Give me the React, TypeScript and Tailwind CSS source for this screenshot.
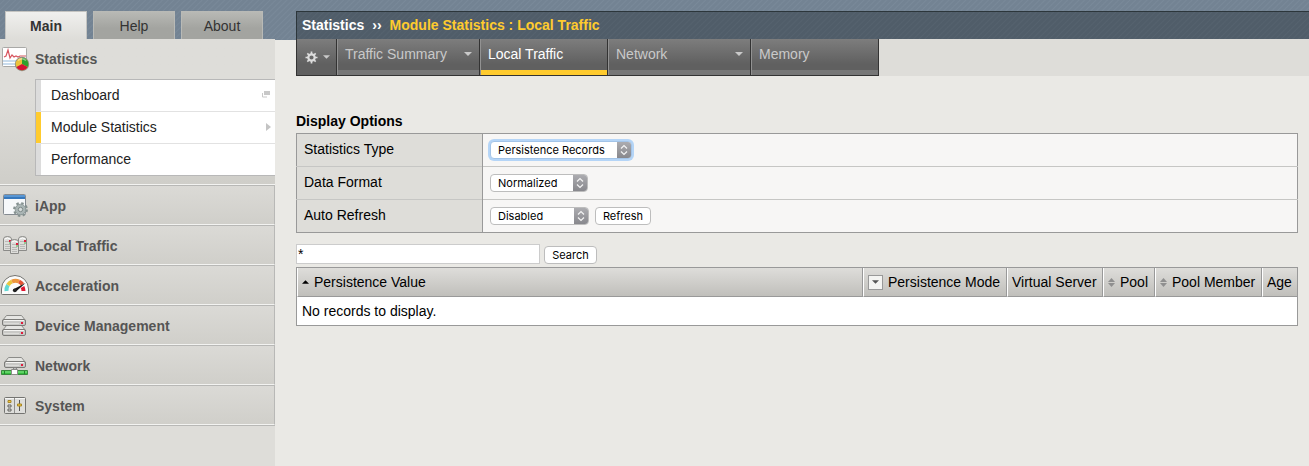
import type { ReactNode } from 'react';

function StatisticsIcon() {
  return (
    <svg width="30" height="28" viewBox="0 0 30 28" aria-hidden="true">
      <rect x="2.5" y="2.5" width="24" height="19" rx="1" fill="#fff" stroke="#a9a9a7" />
      <path d="M3 16h23M3 19h23" stroke="#c9dced" strokeWidth="2" />
      <path d="M4 12l2-1 2-6 2 8 2-3 2 2 2-1 2 1 2-1h6" fill="none" stroke="#d8565f" strokeWidth="1.2" />
      <circle cx="22" cy="19" r="7.2" fill="#8a8a86" />
      <circle cx="22" cy="19" r="6.3" fill="#ecc33b" />
      <path d="M22 19V12.700a6.300 6.300 0 0 1 5.500 9.400z" fill="#2fa12d" />
      <path d="M22 19l5.500 3.100a6.300 6.300 0 0 1-11 0z" fill="#d51234" />
      <path d="M18 15.500q4-3.500 8 0" fill="none" stroke="#fff" strokeOpacity=".45" strokeWidth="1.500" />
    </svg>
  );
}

function IAppIcon() {
  return (
    <svg width="30" height="28" viewBox="0 0 30 28" aria-hidden="true">
      <rect x="3.5" y="2.500" width="22" height="20" rx="1" fill="#f6f8fa" stroke="#858b91" />
      <path d="M4 3h21v4H4z" fill="#3678bd" />
      <path d="M4 4h21" stroke="#7db4e8" />
      <circle cx="20.500" cy="17.500" r="6.300" fill="none" stroke="#84908f" strokeWidth="2.200" strokeDasharray="2.470 2.470" />
      <circle cx="20.500" cy="17.500" r="5.300" fill="#aab5b5" stroke="#8d9998" />
      <circle cx="20.500" cy="17.500" r="2.200" fill="#d5dbda" stroke="#7d8988" />
    </svg>
  );
}

function Tower({ x, y }: { x: number; y: number }) {
  return (
    <g transform={`translate(${x} ${y})`}>
      <path d="M.5 3Q.5 .5 4.500 .5T8.500 3V14.500H.5z" fill="#dededb" stroke="#8b8b88" />
      <path d="M2 5.500h4M2 8.500h5M2 10.500h5M2 12.500h5" stroke="#b9b9b6" />
      <path d="M1.500 3q3-2 6 0" fill="none" stroke="#fff" />
      <path d="M6 4h2v2H6z" fill="#e01b3c" />
      <path d="M6 6.500h2v1H6z" fill="#4db34a" />
    </g>
  );
}

function LocalTrafficIcon() {
  return (
    <svg width="30" height="28" viewBox="0 0 30 28" aria-hidden="true">
      <Tower x={3} y={4} />
      <Tower x={18} y={4} />
      <Tower x={10} y={7} />
    </svg>
  );
}

function AccelerationIcon() {
  return (
    <svg width="30" height="28" viewBox="0 0 30 28" aria-hidden="true">
      <path d="M1.500 21.500V17a13.500 13.500 0 0 1 27 0v4.500q0 1-1 1h-25q-1 0-1-1z" fill="#fbfbfa" stroke="#72726f" />
      <g fill="none" strokeWidth="4">
        <path d="M6.500 19a9 9 0 0 1 1.500-6" stroke="#62d8d3" />
        <path d="M8 13a9 9 0 0 1 4-3.500" stroke="#e9c53c" />
        <path d="M12 9.500a9 9 0 0 1 7 0" stroke="#ee963c" />
        <path d="M19 9.500a9 9 0 0 1 3.500 3" stroke="#e45335" />
        <path d="M22.500 15a8 8 0 0 1 1 4" stroke="#e01630" />
      </g>
      <path d="M13 17.500l12.500-6.500-10 9z" fill="#111" />
      <circle cx="14.800" cy="18.300" r="1.900" fill="#222" />
    </svg>
  );
}

function Drive({ width }: { width: number }) {
  return (
    <>
      <path d={`M.500 5.500L4.500 .500H${width - 4.5}L${width - 0.5} 5.500z`} fill="#e6e6e3" stroke="#8b8b88" />
      <rect x=".5" y="4.500" width={width - 1} height="6" rx="1.500" fill="#c9c9c6" stroke="#7b7b78" />
      <path d={`M2 5.500H${width - 2}`} stroke="#f5f5f3" />
      <path d={`M2 8.500H${width - 7}`} stroke="#dcdcd9" />
      <path d={`M${width - 5} 7h2v2h-2z`} fill="#e01b3c" />
    </>
  );
}

function DeviceIcon() {
  return (
    <svg width="30" height="28" viewBox="0 0 30 28" aria-hidden="true">
      <g transform="translate(2 13)">
        <Drive width={24} />
      </g>
      <g transform="translate(2 3)">
        <Drive width={24} />
      </g>
    </svg>
  );
}

function NetworkIcon() {
  return (
    <svg width="30" height="28" viewBox="0 0 30 28" aria-hidden="true">
      <g transform="translate(4 5)">
        <Drive width={22} />
      </g>
      <path d="M13.500 16h3v3h-3z" fill="#efefed" stroke="#888" />
      <path d="M1.500 18.500h26v4h-26z" fill="#35bd3d" stroke="#3b8a40" />
      <path d="M2 20h25" stroke="#8ce98f" />
      <path d="M11.500 17.500h6v5h-6z" fill="#fff" stroke="#8b8b88" />
      <path d="M4.500 19v3M24.500 19v3" stroke="#21842a" />
    </svg>
  );
}

function SystemIcon() {
  return (
    <svg width="30" height="28" viewBox="0 0 30 28" aria-hidden="true">
      <rect x="4.500" y="5.500" width="21" height="16" rx="1" fill="#dededb" stroke="#747471" />
      <path d="M5 6.500h20" stroke="#f6f6f4" />
      <path d="M14.500 6v15" stroke="#8f8f8c" />
      <g fill="#e9e9e6" stroke="#60605d">
        <path d="M8 8.500h3v2H8z" fill="#f5c93c" stroke="#a78728" />
        <path d="M8 13h3v2H8zM8 17h3v2H8z" />
      </g>
      <path d="M19.500 8v11" stroke="#555" />
      <path d="M17.500 12h4v2h-4z" fill="#f5c93c" stroke="#a78728" />
    </svg>
  );
}

function GearIcon() {
  return (
    <svg width="13" height="13" viewBox="0 0 13 13" aria-hidden="true">
      <circle cx="6.500" cy="6.500" r="3.200" fill="none" stroke="#dcdcdc" strokeWidth="2.200" />
      <g stroke="#dcdcdc" strokeWidth="1.700">
        <path d="M6.500 .5v2.500M6.500 10v2.500M.5 6.500H3M10 6.500h2.500M2.300 2.300L4 4M9 9l1.700 1.700M2.300 10.700L4 9M9 4l1.700-1.700" />
      </g>
    </svg>
  );
}

function Caret({ className }: { className?: string }) {
  return (
    <svg width="8" height="4" viewBox="0 0 8 4" aria-hidden="true" className={className}>
      <path d="M0 0h8L4 4z" fill="currentColor" />
    </svg>
  );
}

function SortArrows() {
  return (
    <svg width="7" height="9" viewBox="0 0 7 9" aria-hidden="true" className="text-[#8f8f8f]">
      <path d="M0 4L3.500 0 7 4zM0 5h7L3.500 9z" fill="currentColor" />
    </svg>
  );
}

const modules: { name: string; icon: ReactNode }[] = [
  { name: 'iApp', icon: <IAppIcon /> },
  { name: 'Local Traffic', icon: <LocalTrafficIcon /> },
  { name: 'Acceleration', icon: <AccelerationIcon /> },
  { name: 'Device Management', icon: <DeviceIcon /> },
  { name: 'Network', icon: <NetworkIcon /> },
  { name: 'System', icon: <SystemIcon /> },
];

function SideTab({ label, active }: { label: string; active?: boolean }) {
  return (
    <button
      type="button"
      className={
        'h-7 w-[82px] border border-b-0 text-sm text-[#333] ' +
        (active
          ? 'border-[#c4c4c1] bg-linear-to-b from-[#f0f0ee] to-[#deddd9] font-bold'
          : 'border-[#b9bab6] bg-linear-to-b from-[#b8b9b5] to-[#a3a4a0] to-60%')
      }
    >
      {label}
    </button>
  );
}

function SubItem({ label, active, mark }: { label: string; active?: boolean; mark?: ReactNode }) {
  return (
    <li className="border-b border-[#e2e2e2] last:border-[#b8b8b8]">
      <a
        href="#"
        className={
          'flex h-[31px] items-center justify-between border-l-[5px] bg-white pr-1 pb-[2px] pl-[10px] text-[#222] ' +
          (active ? 'border-[#ffcb2e]' : 'border-[#dcdcdc]')
        }
      >
        {label}
        {mark}
      </a>
    </li>
  );
}

function Sidebar() {
  return (
    <aside className="flex w-[275px] shrink-0 flex-col pt-[11px]">
      <div className="flex gap-[6px] pl-[5px]">
        <SideTab label="Main" active />
        <SideTab label="Help" />
        <SideTab label="About" />
      </div>
      <nav className="grow bg-[#deddd9]">
        <section className="border-b border-[#f3f3f1] bg-linear-to-b from-[#deddd9] from-40% to-[#cfcec9] pb-2">
          <a href="#" className="flex h-10 items-center gap-[5px] font-bold text-[#555]">
            <StatisticsIcon />
            Statistics
          </a>
          <ul className="ml-[35px] border-t border-l border-[#b8b8b8]">
            <SubItem
              label="Dashboard"
              mark={
                <svg width="9" height="7" viewBox="0 0 9 7" aria-hidden="true">
                  <path d="M2 0h6v4H2z" fill="#c8c8c8" />
                  <path d="M.5 2v4H5" fill="none" stroke="#c8c8c8" />
                </svg>
              }
            />
            <SubItem
              label="Module Statistics"
              active
              mark={
                <svg width="5" height="8" viewBox="0 0 5 8" aria-hidden="true">
                  <path d="M0 0l5 4-5 4z" fill="#c4c4c4" />
                </svg>
              }
            />
            <SubItem label="Performance" />
          </ul>
        </section>
        <ul className="border-b border-[#b8b8b6]">
          {modules.map((m) => (
            <li key={m.name}>
              <a
                href="#"
                className="flex h-10 items-center gap-[5px] border-t border-r border-b border-t-[#b8b8b6] border-r-[#b8b8b6] border-b-[#f3f3f1] bg-linear-to-b from-[#dbdad6] to-[#d0cfca] pt-[2px] font-bold text-[#555]"
              >
                {m.icon}
                {m.name}
              </a>
            </li>
          ))}
        </ul>
      </nav>
    </aside>
  );
}

function NavTab({ label, active, menu, width }: { label: string; active?: boolean; menu?: boolean; width: string }) {
  return (
    <a
      href="#"
      className={
        'flex items-center justify-between border-r border-l border-r-[#333] border-l-[#929292] px-[7px] pb-[6px] ' +
        width +
        (active ? ' text-white shadow-[inset_0_-5px_0_#ffcb2e]' : ' text-[#c9c9c9] shadow-[inset_0_-5px_0_#777777]')
      }
    >
      {label}
      {menu && <Caret />}
    </a>
  );
}

function Select({ id, value, options, width, focused }: { id: string; value: string; options: string[]; width: string; focused?: boolean }) {
  return (
    <span
      className={
        'relative flex h-[18px] overflow-hidden rounded-[4px] border bg-white ' +
        width +
        (focused ? ' border-[#a3c4e8] ring-2 ring-[#b5d5f7]' : ' border-[#bdbdbd]')
      }
    >
      <select id={id} defaultValue={value} className="w-full appearance-none pl-[7px] font-['Inter',sans-serif] text-[11px] leading-4 text-black outline-none">
        {options.map((o) => (
          <option key={o}>{o}</option>
        ))}
      </select>
      <span className="pointer-events-none absolute inset-y-0 right-0 flex w-[14px] items-center justify-center bg-linear-to-b from-[#acacb0] to-[#88888d]">
        <svg width="8" height="12" viewBox="0 0 8 12" aria-hidden="true">
          <path d="M1 4.500L4 1.500l3 3M1 7.500l3 3 3-3" fill="none" stroke="#f4f4f4" strokeWidth="1.200" />
        </svg>
      </span>
    </span>
  );
}

function PushButton({ label, width }: { label: string; width: string }) {
  return (
    <button type="button" className={"h-[18px] rounded-[4px] border border-[#bdbdbd] bg-white font-['Inter',sans-serif] text-[11px] leading-4 text-black " + width}>
      {label}
    </button>
  );
}

function OptionRow({ id, label, children }: { id: string; label: string; children: ReactNode }) {
  return (
    <tr className="h-[33px] border-b border-[#c6c6c4] last:border-[#999]">
      <th scope="row" className="border-r border-r-[#999] bg-[#deddd9] pb-[2px] pl-[7px] text-left font-normal">
        <label htmlFor={id}>{label}</label>
      </th>
      <td className="bg-[#f7f6f5] pl-[7px]">
        <div className="flex items-center gap-[6px]">{children}</div>
      </td>
    </tr>
  );
}

const headCell = 'h-[29px] border-r border-b border-l border-r-[#999] border-b-[#999] border-l-white p-0 pl-1 text-left font-normal whitespace-nowrap';

export default function App() {
  return (
    <div className="flex min-h-screen bg-[#eae9e5] bg-[repeating-linear-gradient(135deg,#738393_0px,#738393_2px,#798999_3px,#738393_4px)] bg-[length:100%_40px] bg-no-repeat font-['Liberation_Sans',Arial,sans-serif] text-sm text-black">
      <Sidebar />
      <main className="min-w-0 grow pt-[11px] pl-[21px]">
        <header>
          <div className="flex h-7 items-center gap-2 border-t border-l border-[#2c363b] bg-[repeating-linear-gradient(135deg,#505d69_0px,#505d69_2px,#55626e_3px,#505d69_4px)] pb-[2px] pl-[5px] font-bold text-white">
            <a href="#">Statistics</a>
            <span>››</span>
            <h1 className="text-[#ffcb2e]">Module Statistics : Local Traffic</h1>
          </div>
          <div className="flex bg-[#deddd9]">
            <nav className="flex h-[37px] border-b border-l border-[#333] bg-linear-to-b from-[#7d7d7d] to-[#606060] to-70%">
              <button type="button" aria-label="Preferences" className="flex w-10 items-center gap-[5px] border-r border-[#333] pl-2 text-[#c9c9c9]">
                <GearIcon />
                <Caret className="w-[7px]" />
              </button>
              <NavTab label="Traffic Summary" menu width="w-[143px]" />
              <NavTab label="Local Traffic" active width="w-[128px]" />
              <NavTab label="Network" menu width="w-[143px]" />
              <NavTab label="Memory" width="w-[128px]" />
            </nav>
          </div>
        </header>

        <div className="pt-[35px] pr-[11px]">
          <h2 className="h-[22px] leading-5 font-bold">Display Options</h2>
          <table className="w-full table-fixed border-collapse border border-[#999]">
            <colgroup>
              <col className="w-[186px]" />
              <col />
            </colgroup>
            <tbody>
              <OptionRow id="stat-type" label="Statistics Type">
                <Select id="stat-type" value="Persistence Records" options={['Persistence Records', 'Virtual Servers', 'Pools']} width="w-[142px]" focused />
              </OptionRow>
              <OptionRow id="data-format" label="Data Format">
                <Select id="data-format" value="Normalized" options={['Normalized', 'Unformatted']} width="w-[98px]" />
              </OptionRow>
              <OptionRow id="auto-refresh" label="Auto Refresh">
                <Select id="auto-refresh" value="Disabled" options={['Disabled', '10 seconds', '60 seconds']} width="w-[99px]" />
                <PushButton label="Refresh" width="w-[56px]" />
              </OptionRow>
            </tbody>
          </table>

          <form className="flex items-end gap-1 pt-[11px] pb-[3px]">
            <input type="text" aria-label="Search records" defaultValue="*" className="h-5 w-[244px] border border-[#ccc] bg-white px-[1px] outline-none" />
            <PushButton label="Search" width="w-[53px]" />
          </form>

          <table className="w-full table-fixed border-separate border-spacing-0 border-t border-l border-[#999]">
            <colgroup>
              <col />
              <col className="w-[144px]" />
              <col className="w-[96px]" />
              <col className="w-[52px]" />
              <col className="w-[107px]" />
              <col className="w-[36px]" />
            </colgroup>
            <thead className="bg-linear-to-b from-[#deddda] to-[#bfbeba]">
              <tr>
                <th scope="col" className={headCell}>
                  <span className="flex items-center gap-[5px]">
                    <Caret className="w-[7px] rotate-180" />
                    Persistence Value
                  </span>
                </th>
                <th scope="col" className={headCell}>
                  <span className="flex items-center gap-[5px]">
                    <button type="button" aria-label="Filter by mode" className="flex size-[15px] items-center justify-center border border-[#999] bg-[#f4f4f2] text-[#555]">
                      <Caret className="w-[7px]" />
                    </button>
                    Persistence Mode
                  </span>
                </th>
                <th scope="col" className={headCell}>Virtual Server</th>
                <th scope="col" className={headCell}>
                  <span className="flex items-center gap-[5px]">
                    <SortArrows />
                    Pool
                  </span>
                </th>
                <th scope="col" className={headCell}>
                  <span className="flex items-center gap-[5px]">
                    <SortArrows />
                    Pool Member
                  </span>
                </th>
                <th scope="col" className={headCell}>Age</th>
              </tr>
            </thead>
            <tbody>
              <tr>
                <td colSpan={6} className="h-[29px] border-r border-b border-[#999] bg-white p-0 pl-[5px]">
                  No records to display.
                </td>
              </tr>
            </tbody>
          </table>
        </div>
      </main>
    </div>
  );
}
